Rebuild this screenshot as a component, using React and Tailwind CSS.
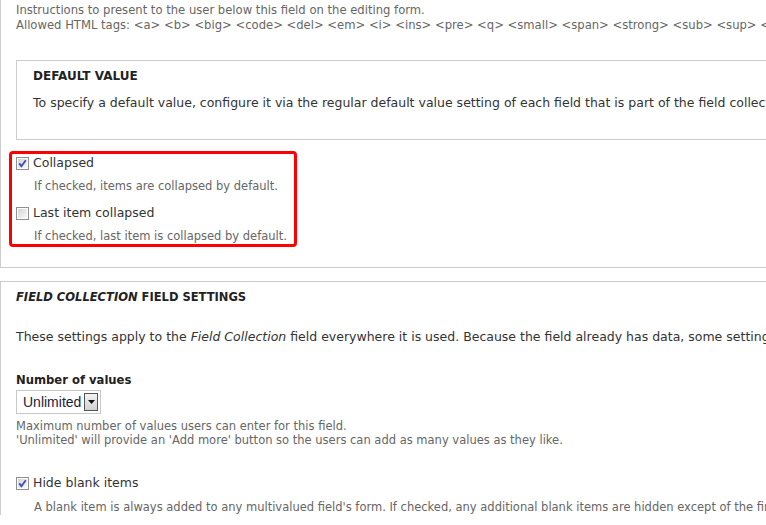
import React from "react";

const Checkbox = ({ checked }) => (
  <svg width="13" height="13" viewBox="0 0 13 13" className="shrink-0 mt-px">
    <defs>
      <linearGradient id={checked ? "cbOn" : "cbOff"} x1="0" y1="0" x2="1" y2="1">
        <stop offset="0" stopColor="#d4d4d4" />
        <stop offset="1" stopColor="#fafafa" />
      </linearGradient>
    </defs>
    <rect x="0.5" y="0.5" width="12" height="12" fill="#fff" stroke="#8f8f8f" />
    <rect x="2" y="2" width="9" height="9" fill={`url(#${checked ? "cbOn" : "cbOff"})`} />
    {checked && (
      <path d="M3.2 6.4 L5.4 9.2 L9.8 3.2" fill="none" stroke="#3c4fbf" strokeWidth="1.9" />
    )}
  </svg>
);

const CheckRow = ({ checked, label, className = "" }) => (
  <div className={`flex items-center gap-1 h-4 leading-4 text-[12.5px] text-[#333] ${className}`}>
    <Checkbox checked={checked} />
    <span>{label}</span>
  </div>
);

const Description = ({ children, className = "" }) => (
  <p className={`pl-[18px] text-[11.5px] leading-[15px] text-[#666] whitespace-nowrap ${className}`}>
    {children}
  </p>
);

export default function App() {
  return (
    <div className="w-[766px] h-[525px] overflow-hidden bg-white font-['DejaVu_Sans',sans-serif]">
      <div className="w-[1400px]">
        {/* settings fieldset, top cut off */}
        <div className="border-l border-b border-[#cccccc] pl-[15px] pb-5">
          <div className="pt-[3px] text-[11.6px] leading-[15px] text-[#666] whitespace-nowrap">
            <p>Instructions to present to the user below this field on the editing form.</p>
            <p>
              Allowed HTML tags: &lt;a&gt; &lt;b&gt; &lt;big&gt; &lt;code&gt; &lt;del&gt; &lt;em&gt;
              &lt;i&gt; &lt;ins&gt; &lt;pre&gt; &lt;q&gt; &lt;small&gt; &lt;span&gt; &lt;strong&gt;
              &lt;sub&gt; &lt;sup&gt; &lt;tt&gt; &lt;ol&gt; &lt;ul&gt; &lt;li&gt; &lt;p&gt; &lt;br&gt;
            </p>
          </div>

          <div className="mt-[27px] h-[80px] border border-[#cccccc] pl-4 whitespace-nowrap">
            <h3 className="mt-[7px] text-[12px] leading-4 font-bold text-[#222]">DEFAULT VALUE</h3>
            <p className="mt-[11px] text-[12.5px] leading-4 text-[#333]">
              To specify a default value, configure it via the regular default value setting of each field that is
              part of the field collection.
            </p>
          </div>

          <div className="mt-[11px] -ml-[7px] w-[288px] h-[96px] border-[3px] border-[#ff0000] rounded-[4px] pl-1 pt-px">
            <CheckRow checked label="Collapsed" />
            <Description className="mt-2">If checked, items are collapsed by default.</Description>
            <CheckRow label="Last item collapsed" className="mt-[11px]" />
            <Description className="mt-2">If checked, last item is collapsed by default.</Description>
          </div>
        </div>

        {/* field settings fieldset */}
        <div className="mt-[13px] border-l border-t border-[#cccccc] pl-[15px] pt-[7px] whitespace-nowrap">
          <h3 className="text-[11.5px] leading-4 font-bold text-[#222]">
            <em>FIELD COLLECTION</em> FIELD SETTINGS
          </h3>
          <p className="mt-6 text-[12.5px] leading-4 text-[#333]">
            These settings apply to the <em>Field Collection</em> field everywhere it is used. Because the field
            already has data, some settings can no longer be changed.
          </p>

          <label className="block mt-[27px] text-[11.6px] leading-4 font-bold text-[#222]">Number of values</label>
          <div className="mt-[2px] w-[85px] h-[24px] border border-[#c8c8c8] bg-white flex items-center pl-[6px] pr-[2px] gap-[3px]">
            <span className="font-['Liberation_Sans',sans-serif] text-[14px] text-[#1c1c3a]">Unlimited</span>
            <span className="w-[18px] h-[18px] border border-[#555] bg-gradient-to-b from-[#f4f4f4] to-[#d0d0d0] flex items-center justify-center">
              <svg width="7" height="4" viewBox="0 0 7 4">
                <path d="M0 0 H7 L3.5 4 Z" fill="#111" />
              </svg>
            </span>
          </div>
          <div className="mt-[5px] text-[11.5px] leading-[14px] text-[#666]">
            <p>Maximum number of values users can enter for this field.</p>
            <p>'Unlimited' will provide an 'Add more' button so the users can add as many values as they like.</p>
          </div>

          <CheckRow checked label="Hide blank items" className="mt-[28px]" />
          <Description className="mt-[9px]">
            A blank item is always added to any multivalued field's form. If checked, any additional blank items are
            hidden except of the first item.
          </Description>
        </div>
      </div>
    </div>
  );
}
